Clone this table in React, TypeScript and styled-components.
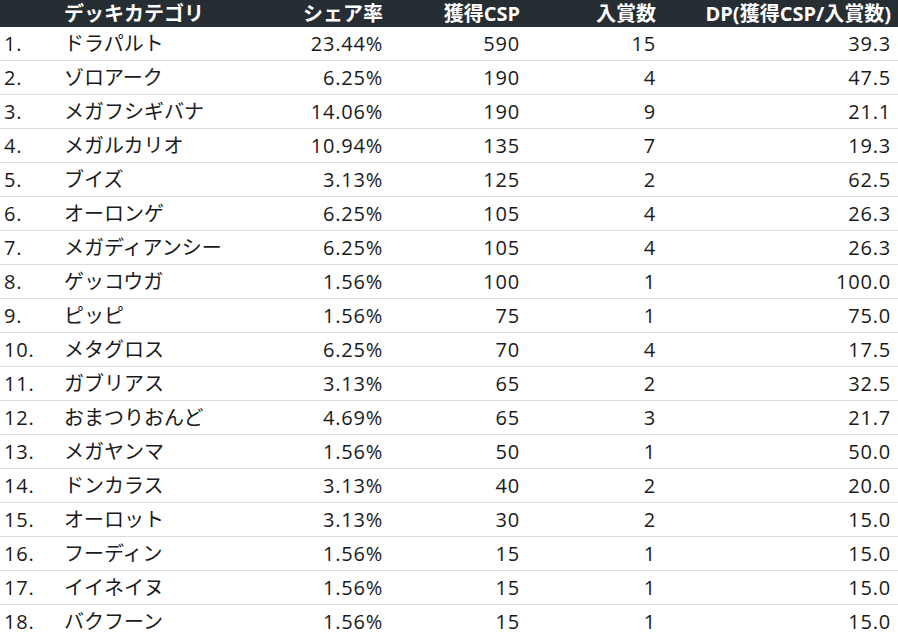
import React from 'react';
import styled, {createGlobalStyle} from 'styled-components';

const GlobalStyle = createGlobalStyle`
    body {
        margin: 0;
        background: #fff;
        font-family: "Open Sans", "Noto Sans CJK JP", sans-serif;
    }
`;

const COLUMNS = '64px 200px 119px 137px 136px 242px';

const Table = styled.div`
    width: 898px;
    color: #1a1a1a;
`;

const HeaderRow = styled.div`
    display: grid;
    grid-template-columns: ${COLUMNS};
    height: 27px;
    align-items: center;
    background: #262d33;
    color: #fff;
    font-weight: 700;
    font-size: 20px;
`;

const Row = styled.div`
    display: grid;
    grid-template-columns: ${COLUMNS};
    box-sizing: border-box;
    height: 34px;
    padding-top: 1px;
    align-items: center;
    border-bottom: 1px solid #dcdcdc;
    font-size: 20px;
    font-weight: 400;
`;

const Cell = styled.div<{$align?: 'left' | 'right'; $pad?: number; $num?: boolean}>`
    text-align: ${(p) => p.$align || 'left'};
    padding-left: ${(p) => (p.$align === 'right' ? 0 : p.$pad || 0)}px;
    padding-right: ${(p) => (p.$align === 'right' ? p.$pad || 0 : 0)}px;
    letter-spacing: ${(p) => (p.$num ? '0.8px' : 'normal')};
    white-space: nowrap;
    line-height: 1;
`;

interface DeckRow {
    name: string;
    share: string;
    csp: number;
    count: number;
    dp: string;
}

const rows: DeckRow[] = [
    {name: 'ドラパルト', share: '23.44%', csp: 590, count: 15, dp: '39.3'},
    {name: 'ゾロアーク', share: '6.25%', csp: 190, count: 4, dp: '47.5'},
    {name: 'メガフシギバナ', share: '14.06%', csp: 190, count: 9, dp: '21.1'},
    {name: 'メガルカリオ', share: '10.94%', csp: 135, count: 7, dp: '19.3'},
    {name: 'ブイズ', share: '3.13%', csp: 125, count: 2, dp: '62.5'},
    {name: 'オーロンゲ', share: '6.25%', csp: 105, count: 4, dp: '26.3'},
    {name: 'メガディアンシー', share: '6.25%', csp: 105, count: 4, dp: '26.3'},
    {name: 'ゲッコウガ', share: '1.56%', csp: 100, count: 1, dp: '100.0'},
    {name: 'ピッピ', share: '1.56%', csp: 75, count: 1, dp: '75.0'},
    {name: 'メタグロス', share: '6.25%', csp: 70, count: 4, dp: '17.5'},
    {name: 'ガブリアス', share: '3.13%', csp: 65, count: 2, dp: '32.5'},
    {name: 'おまつりおんど', share: '4.69%', csp: 65, count: 3, dp: '21.7'},
    {name: 'メガヤンマ', share: '1.56%', csp: 50, count: 1, dp: '50.0'},
    {name: 'ドンカラス', share: '3.13%', csp: 40, count: 2, dp: '20.0'},
    {name: 'オーロット', share: '3.13%', csp: 30, count: 2, dp: '15.0'},
    {name: 'フーディン', share: '1.56%', csp: 15, count: 1, dp: '15.0'},
    {name: 'イイネイヌ', share: '1.56%', csp: 15, count: 1, dp: '15.0'},
    {name: 'バクフーン', share: '1.56%', csp: 15, count: 1, dp: '15.0'},
];

export default function App() {
    return (
        <>
            <GlobalStyle />
            <Table>
                <HeaderRow>
                    <Cell />
                    <Cell>デッキカテゴリ</Cell>
                    <Cell $align="right">シェア率</Cell>
                    <Cell $align="right">獲得CSP</Cell>
                    <Cell $align="right">入賞数</Cell>
                    <Cell $align="right" $pad={7}>
                        DP(獲得CSP/入賞数)
                    </Cell>
                </HeaderRow>
                {rows.map((row, i) => (
                    <Row key={row.name}>
                        <Cell $pad={4} $num>
                            {i + 1}.
                        </Cell>
                        <Cell>{row.name}</Cell>
                        <Cell $align="right" $num>
                            {row.share}
                        </Cell>
                        <Cell $align="right" $num>
                            {row.csp}
                        </Cell>
                        <Cell $align="right" $num>
                            {row.count}
                        </Cell>
                        <Cell $align="right" $pad={7} $num>
                            {row.dp}
                        </Cell>
                    </Row>
                ))}
            </Table>
        </>
    );
}
